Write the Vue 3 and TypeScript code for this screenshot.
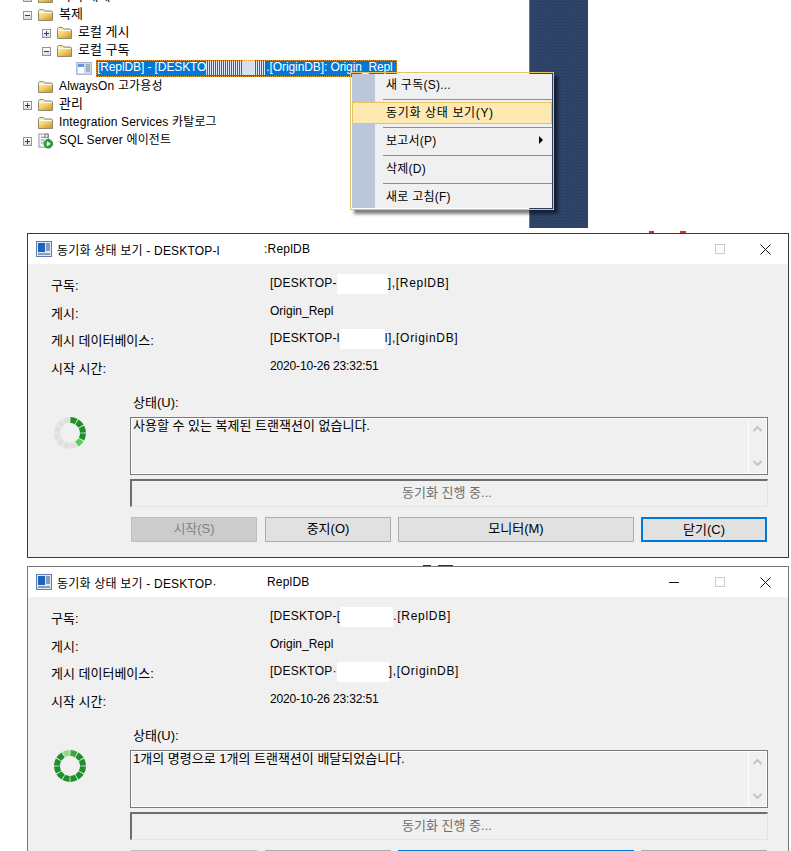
<script setup lang="ts">
interface TreeRow { label: string; level: number; exp: '' | 'plus' | 'minus'; icon: 'folder' | 'agent' }
interface Val { pre: string; gap: number; post: string }
interface Dlg { a: string; aw: number; b: string; min: boolean; vals: Val[]; msg: string; done: number; blue: string; border: string }

const tree: TreeRow[] = [
  { label: '서버 개체', level: 0, exp: 'plus', icon: 'folder' },
  { label: '복제', level: 0, exp: 'minus', icon: 'folder' },
  { label: '로컬 게시', level: 1, exp: 'plus', icon: 'folder' },
  { label: '로컬 구독', level: 1, exp: 'minus', icon: 'folder' },
]
const tree2: TreeRow[] = [
  { label: 'AlwaysOn 고가용성', level: 0, exp: '', icon: 'folder' },
  { label: '관리', level: 0, exp: 'plus', icon: 'folder' },
  { label: 'Integration Services 카탈로그', level: 0, exp: '', icon: 'folder' },
  { label: 'SQL Server 에이전트', level: 0, exp: 'plus', icon: 'agent' },
]
const labels = ['구독:', '게시:', '게시 데이터베이스:', '시작 시간:']
const dialogs: Dlg[] = [
  {
    a: '동기화 상태 보기 - DESKTOP-l', aw: 207, b: ':ReplDB', min: false, done: 0, blue: '닫기(C)', border: 'd1',
    vals: [
      { pre: '[DESKTOP-', gap: 51, post: '],[ReplDB]' },
      { pre: 'Origin_Repl', gap: 0, post: '' },
      { pre: '[DESKTOP-l', gap: 45, post: 'l],[OriginDB]' },
      { pre: '2020-10-26 23:32:51', gap: 0, post: '' },
    ],
    msg: '사용할 수 있는 복제된 트랜잭션이 없습니다.',
  },
  {
    a: '동기화 상태 보기 - DESKTOP·', aw: 210, b: 'ReplDB', min: true, done: 1, blue: '모니터(M)', border: 'd2',
    vals: [
      { pre: '[DESKTOP-[', gap: 53, post: '.[ReplDB]' },
      { pre: 'Origin_Repl', gap: 0, post: '' },
      { pre: '[DESKTOP·', gap: 52, post: '],[OriginDB]' },
      { pre: '2020-10-26 23:32:51', gap: 0, post: '' },
    ],
    msg: '1개의 명령으로 1개의 트랜잭션이 배달되었습니다.',
  },
]

function isKo(s: string): boolean {
  return !/[A-Za-z]/.test(s)
}
function seg(i: number): string {
  const gap = 1.8
  const a0 = ((i * 30 + gap - 90) * Math.PI) / 180
  const a1 = ((i * 30 + 30 - gap - 90) * Math.PI) / 180
  const R = 16
  const r = 10
  const p = (rad: number, a: number) => `${(17 + rad * Math.cos(a)).toFixed(2)} ${(17 + rad * Math.sin(a)).toFixed(2)}`
  return `M${p(R, a0)}A${R} ${R} 0 0 1 ${p(R, a1)}L${p(r, a1)}A${r} ${r} 0 0 0 ${p(r, a0)}Z`
}
function segColor(d: Dlg, i: number): string {
  if (d.done) {
    if (i === 11) return '#8fdc85'
    if (i === 0) return '#3fa53f'
    return '#1f8f2c'
  }
  if (i >= 0 && i <= 3) return '#1f8f2c'
  if (i === 4) return '#52d04f'
  return '#e0e0e0'
}
const segs = Array.from({ length: 12 }, (_, i) => i)
</script>

<template>
  <div class="page">
    <section class="top">
      <div class="tree">
        <template v-for="list in [tree, tree2]" :key="list[0].label">
          <div v-for="r in list" :key="r.label" class="row" :class="'lv' + r.level">
            <span class="exp" :class="r.exp">
              <i v-if="r.exp" class="h"></i><i v-if="r.exp === 'plus'" class="v"></i>
            </span>
            <svg v-if="r.icon === 'folder'" class="ico" width="15" height="12" viewBox="0 0 15 12">
              <defs>
                <linearGradient id="fg" x1="0" y1="0" x2="0.7" y2="1">
                  <stop offset="0" stop-color="#fff6cf" /><stop offset="0.55" stop-color="#f6d26c" /><stop offset="1" stop-color="#d79f2c" />
                </linearGradient>
              </defs>
              <path d="M0.5 2.5V1.5L1.5 0.5H5.5L7 2H13.5L14.5 3V11.5H0.5Z" fill="url(#fg)" stroke="#8f8a70" />
              <path d="M1 3.5H14" stroke="#fffbe6" />
            </svg>
            <svg v-else class="ico" width="15" height="16" viewBox="0 0 16 16">
              <rect x="1" y="0.5" width="10" height="14" fill="#f4f6f8" stroke="#8a94a0" />
              <path d="M3 4h6M3 7h4M3 10h3" stroke="#7f8a96" />
              <circle cx="9" cy="2.5" r="2" fill="#e4e8ec" stroke="#69737f" />
              <circle cx="11" cy="11" r="4.5" fill="#35a83a" stroke="#1c6d22" />
              <path d="M9.5 8.5L13.5 11L9.5 13.5Z" fill="#fff" />
            </svg>
            <span class="txt" :class="isKo(r.label) ? 'ko' : 'mix'">{{ r.label }}</span>
          </div>
          <div v-if="list === tree" :key="'sel'" class="row selrow">
            <svg class="selico" width="16" height="13" viewBox="0 0 16 13">
              <rect x="0.5" y="0.5" width="15" height="12" fill="#c9d8ec" stroke="#a9bbd4" />
              <rect x="2" y="2" width="6" height="3" fill="#5f98e0" />
              <rect x="2" y="5" width="6" height="6" fill="#fff" />
              <path d="M10 3h4M10 5h4M10 7h4M10 9h4" stroke="#7d8a9e" />
            </svg>
            <span class="sel">[ReplDB] - [DESKTO<i class="bar"></i>.[OriginDB]: Origin_Repl</span>
          </div>
        </template>
      </div>
      <div class="navy"></div>
      <div class="menu">
        <div class="item">새 구독(S)...</div>
        <div class="sep"></div>
        <div class="item hot">동기화 상태 보기(Y)</div>
        <div class="sep"></div>
        <div class="item">보고서(P)<i class="arrow"></i></div>
        <div class="sep"></div>
        <div class="item">삭제(D)</div>
        <div class="sep"></div>
        <div class="item">새로 고침(F)</div>
      </div>
    </section>

    <i class="tick red t1"></i>
    <i class="tick red t2"></i>
    <i class="tick t3"></i>
    <i class="tick t4"></i>

    <section v-for="d in dialogs" :key="d.border" class="dialog" :class="d.border">
      <header class="title">
        <svg class="wicon" width="16" height="16" viewBox="0 0 16 16">
          <rect x="0.5" y="0.5" width="15" height="15" fill="#dfe8f5" stroke="#5b7fae" />
          <rect x="2" y="2" width="7" height="9" fill="#1f62c0" />
          <path d="M10 3h4M10 5h4M10 7h4M10 9h4M2 13h12" stroke="#33507a" />
        </svg>
        <span class="ta" :style="{ width: d.aw + 'px' }">{{ d.a }}</span>
        <span class="tb">{{ d.b }}</span>
        <div class="ctrls">
          <span v-if="d.min" class="ctl"><i class="min"></i></span>
          <span class="ctl"><i class="max"></i></span>
          <span class="ctl">
            <svg width="11" height="11" viewBox="0 0 11 11"><path d="M0.5 0.5L10.5 10.5M10.5 0.5L0.5 10.5" stroke="#111" fill="none" /></svg>
          </span>
        </div>
      </header>
      <div class="body">
        <div class="info">
          <template v-for="(l, i) in labels" :key="l">
            <div class="lbl">{{ l }}</div>
            <div class="val" :class="{ date: i === 3, plain: i === 1 }">{{ d.vals[i].pre }}<i v-if="d.vals[i].gap" class="redact" :style="{ width: d.vals[i].gap + 'px' }"></i><span class="post">{{ d.vals[i].post }}</span></div>
          </template>
        </div>
        <div class="status">
          <svg class="spin" width="34" height="34" viewBox="0 0 34 34">
            <path v-for="s in segs" :key="s" :d="seg(s)" :fill="segColor(d, s)" />
          </svg>
          <div class="col">
            <div class="slabel">상태(U):</div>
            <div class="box">
              <div class="msg">{{ d.msg }}</div>
              <div class="sb">
                <svg width="9" height="6" viewBox="0 0 9 6"><path d="M0.5 5L4.5 1L8.5 5" fill="none" stroke="#c4c4c4" stroke-width="2" /></svg>
                <svg width="9" height="6" viewBox="0 0 9 6"><path d="M0.5 1L4.5 5L8.5 1" fill="none" stroke="#c4c4c4" stroke-width="2" /></svg>
              </div>
            </div>
            <div class="prog">동기화 진행 중...</div>
            <div class="btns">
              <button class="btn off">시작(S)</button>
              <button class="btn">중지(O)</button>
              <button class="btn wide" :class="{ def: d.blue === '모니터(M)' }">모니터(M)</button>
              <button class="btn" :class="{ def: d.blue === '닫기(C)' }">닫기(C)</button>
            </div>
          </div>
        </div>
      </div>
    </section>
  </div>
</template>

<style scoped>
.page {
  position: relative;
  width: 791px;
  height: 851px;
  overflow: hidden;
  background: #fff;
  font-family: "Liberation Sans", "Noto Sans CJK KR", sans-serif;
  font-size: 12px;
  color: #000;
}
.page i { font-style: normal; }
.top { position: relative; display: flex; height: 228px; }
.tree { width: 529px; height: 241px; overflow: hidden; margin-top: -13px; }
.navy {
  width: 59px;
  height: 228px;
  box-sizing: border-box;
  border-left: 1px solid #6c7a90;
  background-color: #2f4468;
  background-image: radial-gradient(#263a5c 0.8px, transparent 1px);
  background-size: 3px 3px;
}
.row { display: flex; align-items: center; height: 18px; white-space: nowrap; }
.lv0 { padding-left: 23px; }
.lv1 { padding-left: 42px; }
.exp { position: relative; display: block; box-sizing: border-box; width: 9px; height: 9px; margin: 3px 6px 0 0; flex: none; }
.exp.plus, .exp.minus { border: 1px solid #8f969c; background: linear-gradient(#fff, #d9dde2); }
.exp .h { position: absolute; left: 1px; top: 3px; width: 5px; height: 1px; background: #2b3f66; }
.exp .v { position: absolute; left: 3px; top: 1px; width: 1px; height: 5px; background: #2b3f66; }
.ico { flex: none; margin-top: 1px; }
.txt { margin: 0 0 3px 6px; }
.txt.ko { font-size: 13px; }
.txt.mix { letter-spacing: 0.17px; }
.selrow { padding-left: 76px; }
.selico { flex: none; }
.sel {
  box-sizing: border-box;
  margin-left: 4px;
  width: 301px;
  height: 17px;
  line-height: 15px;
  padding-left: 1px;
  letter-spacing: -0.1px;
  background: #0078d7;
  color: #fff;
  outline: 1px dotted #e89a2e;
  outline-offset: -1px;
  overflow: hidden;
}
.bar {
  display: inline-block;
  vertical-align: top;
  width: 60px;
  height: 15px;
  background: linear-gradient(to right, transparent 36px, #d6def0 36px, #d6def0 48px, transparent 48px),
    repeating-linear-gradient(to right, #dfe6f6 0 1px, #0078d7 1px 2px);
}
.menu {
  position: absolute;
  left: 350px;
  top: 72px;
  box-sizing: border-box;
  width: 204px;
  height: 138px;
  padding: 1px;
  border: 1px solid #e5c365;
  background-color: #f0f0f0;
  background-image: linear-gradient(#bcc8d9, #bcc8d9);
  background-size: 23px 100%;
  background-repeat: no-repeat;
  background-origin: content-box;
  background-clip: content-box;
  box-shadow: 4px 4px 3px rgba(0, 0, 0, 0.5);
  letter-spacing: 0.25px;
}
.item {
  position: relative;
  box-sizing: border-box;
  height: 22px;
  line-height: 20px;
  padding-left: 33px;
  border: 1px solid transparent;
}
.item.hot { background: #fee9b2; border-color: #e5c365; letter-spacing: 0.65px; }
.sep { height: 1px; margin: 3px 0 2px 31px; background: #8b8f96; }
.arrow {
  position: absolute;
  left: 186px;
  top: 5px;
  border-left: 4px solid #000;
  border-top: 4px solid transparent;
  border-bottom: 4px solid transparent;
}
.tick { position: absolute; height: 1px; background: #333; }
.tick.red { background: #d92b2b; height: 2px; }
.t1 { left: 649px; top: 231px; width: 5px; }
.t2 { left: 680px; top: 231px; width: 6px; }
.t3 { left: 423px; top: 565px; width: 8px; }
.t4 { left: 438px; top: 565px; width: 15px; }
.dialog {
  box-sizing: border-box;
  width: 762px;
  height: 325px;
  margin-left: 27px;
  border: 1px solid #3a3a3a;
  background: #f0f0f0;
  overflow: hidden;
}
.d1 { margin-top: 5px; }
.d2 { margin-top: 8px; border-color: #777; }
.title { display: flex; align-items: center; height: 30px; padding-left: 8px; background: #fff; letter-spacing: 0.2px; }
.wicon { flex: none; margin-right: 5px; }
.ta { white-space: nowrap; overflow: hidden; flex: none; }
.tb { flex: 1; }
.ctrls { display: flex; }
.ctl { display: flex; align-items: center; justify-content: center; width: 45.5px; height: 30px; }
.min { width: 10px; height: 1px; background: #111; }
.max { box-sizing: border-box; width: 10px; height: 10px; border: 1px solid #ccc; }
.info {
  display: grid;
  grid-template-columns: 219px 1fr;
  grid-auto-rows: 27.5px;
  padding: 7px 0 0 23px;
}
.lbl { line-height: 30px; font-size: 13px; }
.val { line-height: 24px; height: 24px; white-space: nowrap; letter-spacing: 0.25px; }
.val.date { letter-spacing: -0.15px; }
.val.plain { letter-spacing: 0; }
.post { letter-spacing: 0.7px; }
.redact { display: inline-block; height: 20px; vertical-align: middle; background: #fff; }
.status { display: flex; margin-top: 13px; }
.spin { flex: none; margin: 22px 0 0 25px; }
.col { width: 638px; margin-left: 43px; font-size: 13px; }
.slabel { height: 16px; line-height: 17px; margin: 0 0 7px 3px; }
.box {
  display: flex;
  box-sizing: border-box;
  height: 58px;
  border: 1px solid #7a7a7a;
  box-shadow: inset 0 0 0 1px #fff;
}
.msg { flex: 1; padding: 0 0 0 2px; line-height: 16px; }
.sb {
  display: flex;
  flex-direction: column;
  justify-content: space-between;
  align-items: center;
  width: 18px;
  padding: 7px 0;
  border-left: 1px solid #fff;
  box-sizing: border-box;
  margin: 1px 1px 1px 0;
}
.prog {
  box-sizing: border-box;
  height: 28px;
  margin-top: 4px;
  padding-right: 5px;
  line-height: 24px;
  text-align: center;
  color: #6d6d6d;
  border-style: solid;
  border-width: 2px 1px 1px 2px;
  border-color: #6e6e6e #e3e3e3 #e3e3e3 #6e6e6e;
}
.btns { display: flex; gap: 7px; margin: 10px 0 0 1px; }
.btn {
  box-sizing: border-box;
  width: 126px;
  height: 25px;
  padding: 0 0 4px;
  background: #e1e1e1;
  border: 1px solid #adadad;
  border-radius: 0;
  font: inherit;
  color: #000;
}
.btn.off { background: #cccccc; border-color: #bfbfbf; color: #838383; margin-right: 1px; }
.btn.wide { width: 236px; }
.btn.def { border: 2px solid #0078d7; }
</style>

<style>
html, body { margin: 0; padding: 0; background: #fff; overflow: hidden; }
</style>
